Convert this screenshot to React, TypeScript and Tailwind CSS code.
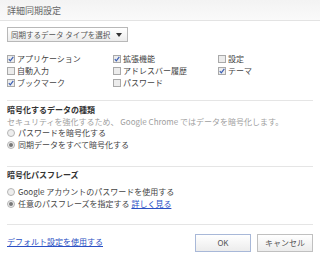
import React from 'react';

const font = { fontFamily: '"Noto Sans CJK JP", "Noto Sans", sans-serif' };

function Check({ checked, label }: { checked?: boolean; label: string }) {
  return (
    <div className="flex h-[12px] items-center gap-[2px]">
      <span className="flex h-[8px] w-[8px] items-center justify-center border border-[#a9a9a9] bg-[#ececec]">
        {checked && (
          <svg width="6" height="6" viewBox="0 0 6 6">
            <path d="M0.8 3.2 L2.3 4.8 L5.3 0.8" fill="none" stroke="#3b5fb5" strokeWidth="1.2" />
          </svg>
        )}
      </span>
      <span className="whitespace-nowrap">{label}</span>
    </div>
  );
}

function Radio({ checked, children }: { checked?: boolean; children: React.ReactNode }) {
  return (
    <div className="flex h-[12px] items-center gap-[3px]">
      <span className="flex h-[8px] w-[8px] items-center justify-center rounded-full border border-[#b5b5b5] bg-[#eeeeee]">
        {checked && <span className="h-[4px] w-[4px] rounded-full bg-[#777]" />}
      </span>
      <span className="whitespace-nowrap">{children}</span>
    </div>
  );
}

export default function App() {
  return (
    <div className="h-[257px] w-[320px] overflow-hidden bg-white text-[8px] leading-none text-[#444]" style={font}>
      <div className="flex h-[21px] items-center border-b border-[#e3e3e3] bg-gradient-to-b from-[#f3f3f3] to-[#fafafa] px-[7px] text-[9px] text-[#666]">
        詳細同期設定
      </div>
      <div className="px-[7px]">
        <div className="mt-[6px] flex h-[15px] w-[121px] items-center justify-between border border-[#b8b8b8] bg-gradient-to-b from-white to-[#ececec] pl-[3px] pr-[5px] text-[7.5px] text-[#555]">
          <span className="whitespace-nowrap">同期するデータ タイプを選択</span>
          <svg width="6" height="4" viewBox="0 0 6 4">
            <path d="M0 0 H6 L3 4 Z" fill="#333" />
          </svg>
        </div>

        <div className="mt-[11px] grid grid-cols-[106px_105px_auto]">
          <Check checked label="アプリケーション" />
          <Check checked label="拡張機能" />
          <Check label="設定" />
          <Check label="自動入力" />
          <Check label="アドレスバー履歴" />
          <Check checked label="テーマ" />
          <Check checked label="ブックマーク" />
          <Check label="パスワード" />
        </div>

        <div className="mt-[11px] border-t border-[#e5e5e5]" />
        <div className="mt-[3px] flex h-[12px] items-center font-bold text-[#333]">暗号化するデータの種類</div>
        <div className="mt-[1px] flex h-[10px] items-center whitespace-nowrap text-[#a0a0a0]">
          セキュリティを強化するため、 Google Chrome ではデータを暗号化します。
        </div>
        <Radio>パスワードを暗号化する</Radio>
        <Radio checked>同期データをすべて暗号化する</Radio>

        <div className="mt-[15px] border-t border-[#e5e5e5]" />
        <div className="mt-[2px] flex h-[12px] items-center font-bold text-[#333]">暗号化パスフレーズ</div>
        <div className="mt-[5px]">
          <Radio>Google アカウントのパスワードを使用する</Radio>
          <Radio checked>
            任意のパスフレーズを指定する <a className="text-[#2a4fc4] underline">詳しく見る</a>
          </Radio>
        </div>

        <div className="mt-[14px] border-t border-[#e5e5e5]" />
        <div className="mt-[9px] flex items-center justify-between">
          <a className="-mt-[3px] text-[#2a4fc4] underline">デフォルト設定を使用する</a>
          <div className="flex gap-[6px]">
            <button className="h-[18px] w-[56px] border border-[#a8b8d8] bg-gradient-to-b from-white to-[#ececec] text-[#555]">OK</button>
            <button className="h-[18px] w-[56px] border border-[#c0c0c0] bg-gradient-to-b from-white to-[#ececec] text-[#555]">キャンセル</button>
          </div>
        </div>
      </div>
    </div>
  );
}
